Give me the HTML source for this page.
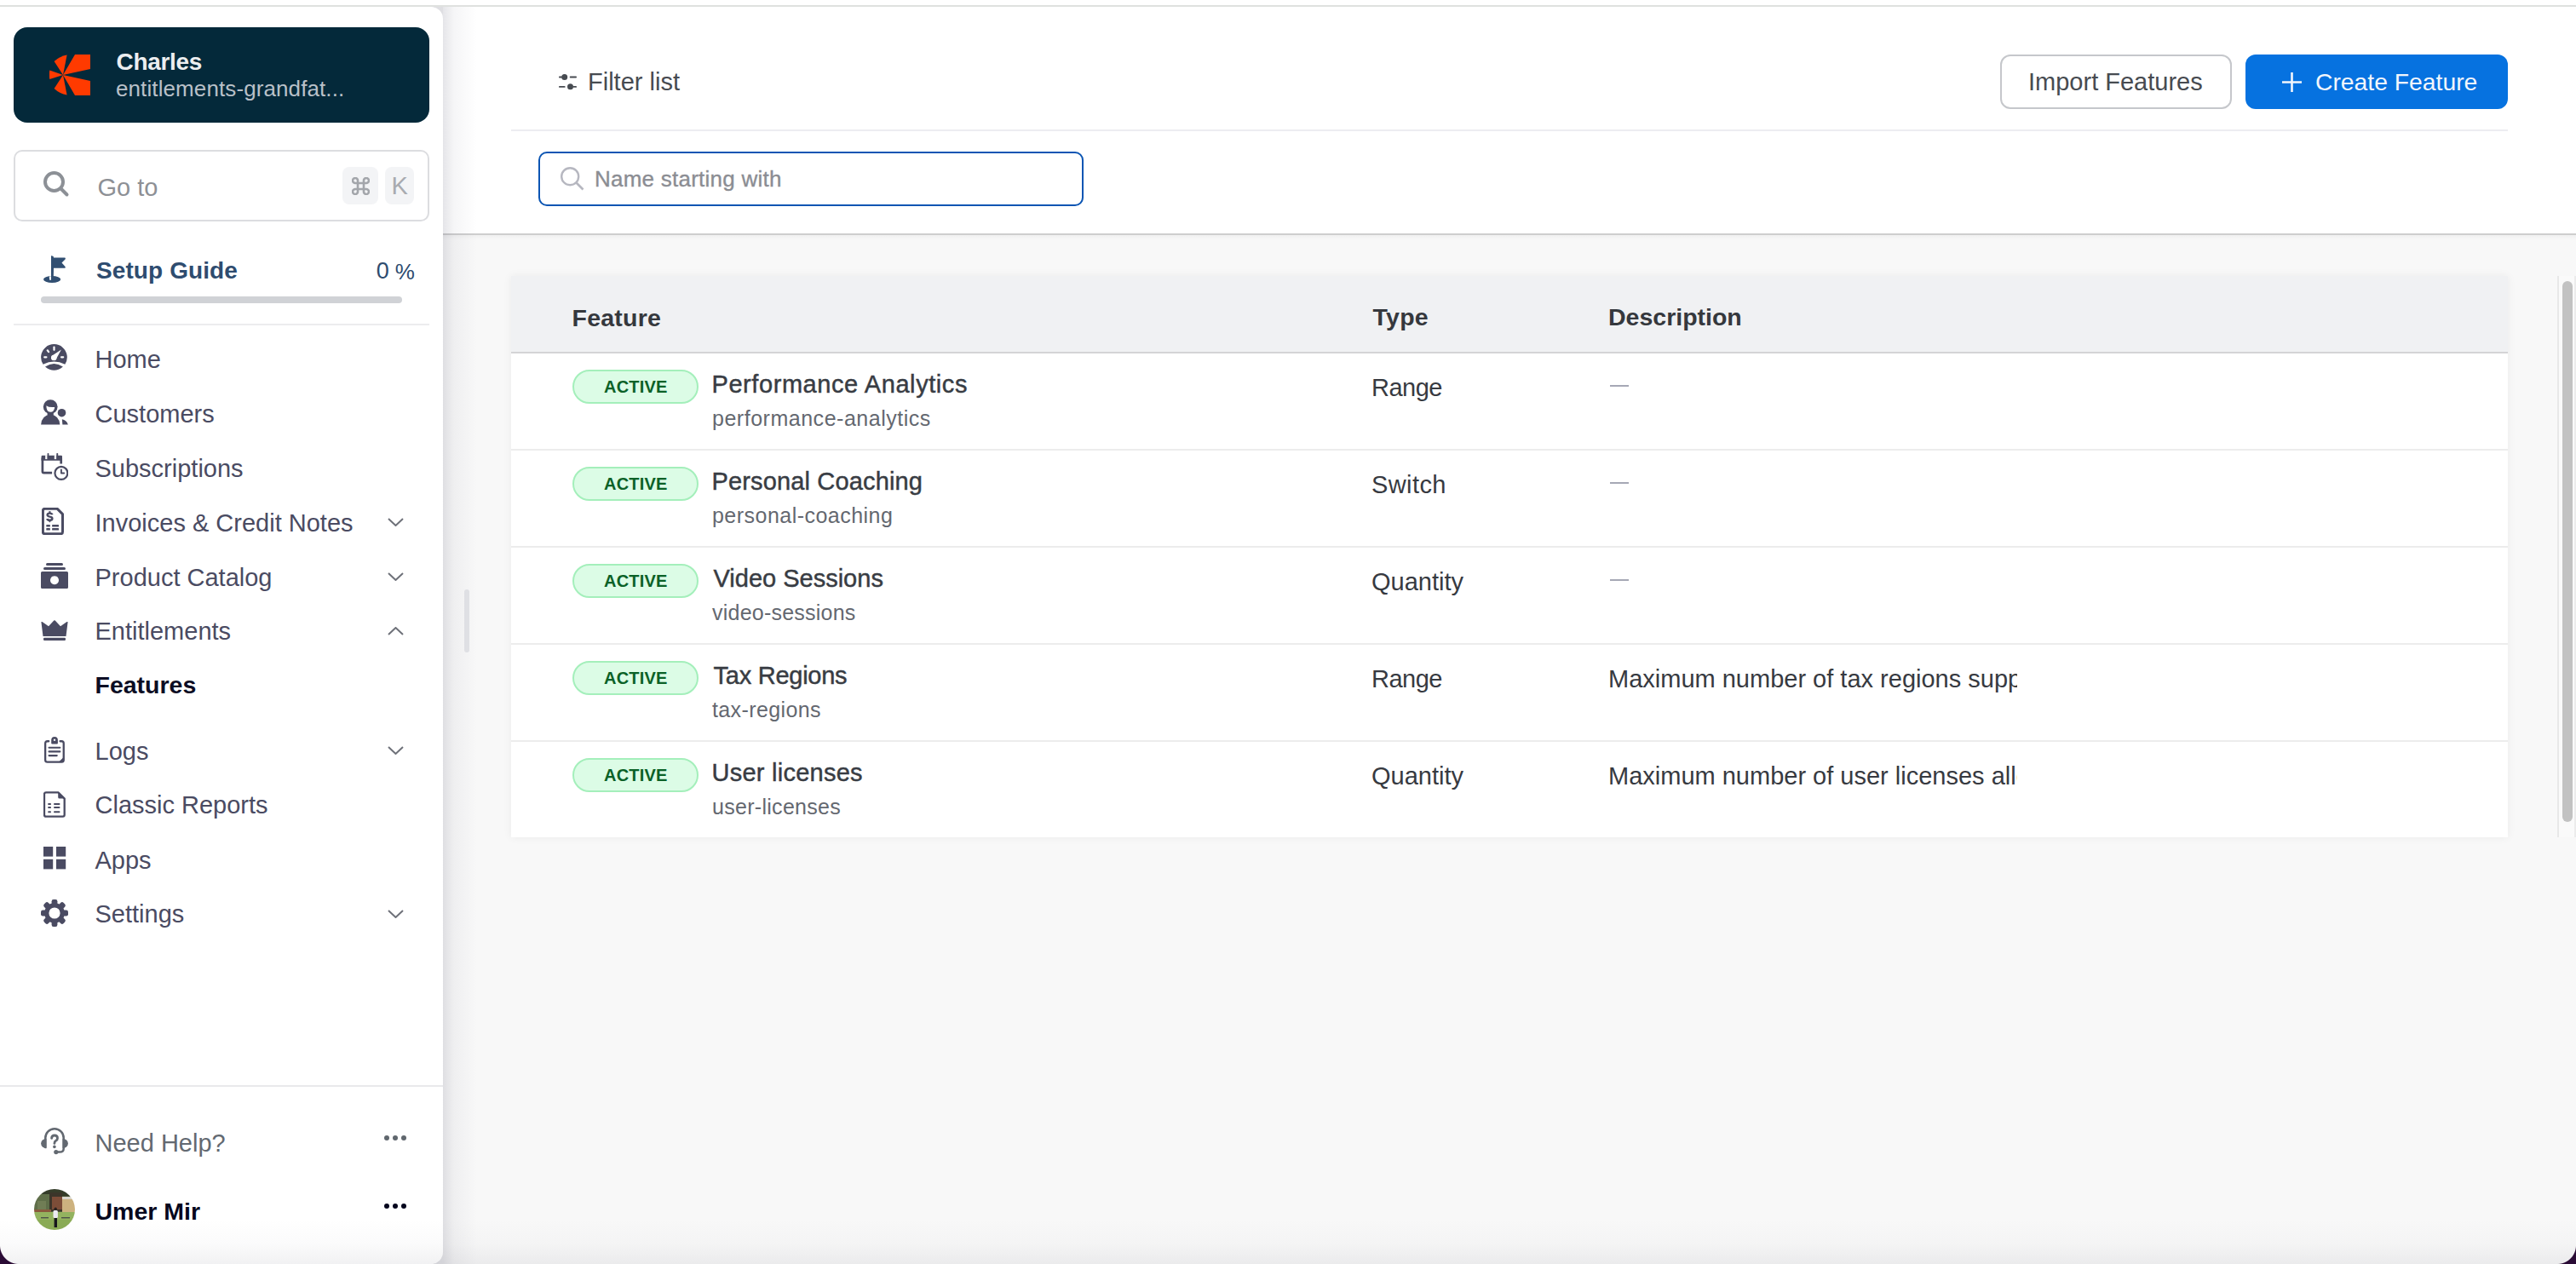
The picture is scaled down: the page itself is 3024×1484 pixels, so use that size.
<!DOCTYPE html>
<html><head><meta charset="utf-8"><title>Features</title>
<style>
html,body{margin:0;padding:0;}
body{width:3024px;height:1484px;position:relative;overflow:hidden;background:#f8f8f8;
font-family:"Liberation Sans",sans-serif;}
.t{position:absolute;white-space:nowrap;}
.r{position:absolute;}
</style></head><body>
<div class="r" style="left:0px;top:0px;width:3024px;height:8px;background:#ffffff"></div>
<div class="r" style="left:520px;top:8px;width:2504px;height:266px;background:#ffffff"></div>
<div class="r" style="left:520px;top:276px;width:2504px;height:6px;background:linear-gradient(to bottom,rgba(0,0,0,0.03),rgba(0,0,0,0))"></div>
<div class="r" style="left:520px;top:274px;width:2504px;height:2px;background:#cecece"></div>
<div class="r" style="left:0px;top:6px;width:3024px;height:2px;background:#dfe1df"></div>
<div class="r" style="left:500px;top:8px;width:60px;height:1476px;background:linear-gradient(to right,rgba(40,40,70,0.12) 33%,rgba(40,40,70,0.045) 55%,rgba(40,40,70,0) 100%)"></div>
<div class="r" style="left:0px;top:8px;width:520px;height:1476px;background:#ffffff;border-radius:0 14px 14px 0"></div>
<div class="r" style="left:16px;top:32px;width:488px;height:112px;background:#04293a;border-radius:16px"></div>
<svg class="r" style="left:58px;top:64px;" width="48" height="48" viewBox="0 0 48 48"><g fill="#ff3a00"><path d="M16 24 L30 0 L48 0 L48 17 Z"/><path d="M16 24 L48 31 L48 48 L30 48 Z"/><path d="M16 24 L5.6 8 Q12 2 20.6 0.5 Z"/><path d="M16 24 L0.3 18.5 Q-0.5 24 0.3 29 Z"/><path d="M16 24 L5.6 40 Q12 46 20.6 47.5 Z"/></g></svg>
<div class="t" style="left:136.5px;top:58.6px;font-size:28px;line-height:28px;color:#eceef0;font-weight:700;letter-spacing:-0.33px;">Charles</div>
<div class="t" style="left:136.0px;top:90.7px;font-size:26px;line-height:26px;color:#b9c0c8;font-weight:400;letter-spacing:0.1px;">entitlements-grandfat...</div>
<div class="r" style="left:16px;top:176px;width:488px;height:84px;box-sizing:border-box;border:2px solid #dcdde0;border-radius:10px;background:#fff"></div>
<svg class="r" style="left:46px;top:196px;" width="40" height="40" viewBox="0 0 40 40"><circle cx="17.5" cy="17.5" r="10.5" fill="none" stroke="#8c9096" stroke-width="4"/><path d="M25.5 25.5 L32.5 32.5" stroke="#8c9096" stroke-width="4" stroke-linecap="round"/></svg>
<div class="t" style="left:114.4px;top:205.7px;font-size:29px;line-height:29px;color:#8d9095;font-weight:400;letter-spacing:0px;">Go to</div>
<div class="r" style="left:402px;top:196px;width:42px;height:44px;background:#f3f4f6;border-radius:8px"></div>
<div class="r" style="left:452px;top:196px;width:34px;height:44px;background:#f3f4f6;border-radius:8px"></div>
<svg class="r" style="left:413px;top:208px;" width="21" height="21" viewBox="0 0 21 21"><g fill="none" stroke="#a3a6ab" stroke-width="2.6" stroke-linejoin="round"><path d="M7 7 H14 V14 H7 Z"/><path d="M7 7 V4.5 A3 3 0 1 0 4.5 7 Z"/><path d="M14 7 V4.5 A3 3 0 1 1 16.5 7 Z"/><path d="M7 14 V16.5 A3 3 0 1 1 4.5 14 Z"/><path d="M14 14 V16.5 A3 3 0 1 0 16.5 14 Z"/></g></svg>
<div class="t" style="left:459.5px;top:203.5px;font-size:29px;line-height:29px;color:#a8abb0;font-weight:400;letter-spacing:0px;">K</div>
<svg class="r" style="left:51px;top:300px;" width="26" height="32" viewBox="0 0 26 32"><g fill="#314f72"><path d="M9 1 Q9.6 -0.6 10.6 0.5 L11.5 2.6 H25 Q26.4 3 25.5 4.6 L21.5 8.6 L25.5 13 Q26.3 14.5 25 14.8 H12 Q11.7 15.5 11.7 17 V24 Z"/><rect x="9" y="1" width="2.8" height="26"/><ellipse cx="10.1" cy="28" rx="10.1" ry="4"/></g><path d="M6.7 24.4 L7.2 28.8 H9 V24.2 Z" fill="#fff"/></svg>
<div class="t" style="left:113.0px;top:304.3px;font-size:28px;line-height:28px;color:#2e4c6f;font-weight:700;letter-spacing:0.1px;">Setup Guide</div>
<div class="t" style="left:441.8px;top:305.1px;font-size:27px;line-height:27px;color:#2e4c6f;font-weight:400;letter-spacing:0px;">0</div>
<div class="t" style="left:463.8px;top:306.0px;font-size:26px;line-height:26px;color:#2e4c6f;font-weight:400;letter-spacing:-0.3px;">%</div>
<div class="r" style="left:48px;top:348px;width:424px;height:8px;background:#d0d2d6;border-radius:4px"></div>
<div class="r" style="left:16px;top:380px;width:488px;height:2px;background:#ececee"></div>
<svg class="r" style="left:47px;top:403px;" width="32" height="32" viewBox="0 0 32 32"><g fill="#4a4b62"><path d="M3.6 24.85 A15.35 15.35 0 1 1 29.3 24.85 Q16.45 17.9 3.6 24.85 Z"/><path d="M6 27.4 Q16.45 20.4 26.9 27.4 Q16.45 36 6 27.4 Z"/></g><g stroke="#fff" stroke-width="2.2" stroke-linecap="round" fill="none"><path d="M16.5 4.6 V7.8"/><path d="M8.7 8.3 L10.1 10.1"/><path d="M5.2 16.3 H7.4"/><path d="M25 16.3 H27.2"/></g><path d="M13.94 14.74 L24.9 7.5 L18.66 19.06 A3.2 3.2 0 0 1 13.94 14.74 Z" fill="#fff"/><circle cx="16.3" cy="16.9" r="3.2" fill="#fff"/></svg>
<svg class="r" style="left:48px;top:469px;" width="32" height="32" viewBox="0 0 32 32"><g fill="#4a4b62"><circle cx="11.2" cy="8.6" r="8.4"/><rect x="7.6" y="14" width="7.2" height="5"/><path d="M0.1 29.5 Q0.9 18.8 11.2 17.8 Q21.5 18.8 22.3 29.5 Z"/><circle cx="24.5" cy="15.7" r="4.8"/><path d="M24.8 23.2 Q30 24 31.9 29.5 H25.4 Z"/></g><path d="M6.4 7.2 Q9.6 9.7 16.2 8.9 Q15.8 14.6 11.2 14.7 Q6.2 14.5 6.4 7.2 Z" fill="#fff"/></svg>
<svg class="r" style="left:47.5px;top:532px;" width="32" height="32" viewBox="0 0 32 32"><g fill="none" stroke="#4a4b62" stroke-width="2.7" stroke-linejoin="round"><path d="M13.1 23.2 H3.5 Q1.9 23.2 1.9 21.6 V6 H23.7 V12.5"/></g><circle cx="23.9" cy="23.4" r="7.45" fill="none" stroke="#4a4b62" stroke-width="2.2"/><path d="M23.9 19.4 V23.5 H27.2" fill="none" stroke="#4a4b62" stroke-width="1.9" stroke-linecap="round" stroke-linejoin="round"/><path d="M0.6 3.8 Q0.6 2.8 1.6 2.8 H24 Q25 2.8 25 3.8 V8.7 H0.6 Z" fill="#4a4b62"/><g fill="#fff"><rect x="5.2" y="2.3" width="2.4" height="4.8"/><rect x="15.8" y="2.3" width="2.5" height="4.8"/></g><g fill="#4a4b62"><rect x="7.6" y="0.1" width="1.8" height="7.5" rx="0.6"/><rect x="18.3" y="0.1" width="1.9" height="7.5" rx="0.6"/></g></svg>
<svg class="r" style="left:49px;top:596px;" width="32" height="32" viewBox="0 0 32 32"><g fill="none" stroke="#4a4b62" stroke-width="3" stroke-linejoin="round"><path d="M3.8 1.35 H18.3 L24.5 7.6 V28.6 Q24.5 30.7 22.4 30.7 H3.5 Q1.4 30.7 1.4 28.6 V3.5 Q1.4 1.35 3.8 1.35 Z"/></g><g fill="#4a4b62"></g><path d="M12.4 8.2 Q12 6.6 9.4 6.6 Q6.6 6.6 6.6 8.6 Q6.6 10.2 9.4 10.6 Q12.4 11 12.4 12.8 Q12.4 14.8 9.4 14.8 Q6.6 14.8 6.3 13" fill="none" stroke="#4a4b62" stroke-width="2.4"/><g fill="#4a4b62"><rect x="8.3" y="4.2" width="2.2" height="3"/><path d="M7.4 15 L9.4 17.4 L11.4 15 Z"/><rect x="5.3" y="20.1" width="4.6" height="2.4" rx="0.6"/><rect x="12.1" y="20.1" width="7.9" height="2.4" rx="0.6"/><rect x="5.3" y="24.1" width="4.6" height="2.4" rx="0.6"/><rect x="12.1" y="24.1" width="7.9" height="2.4" rx="0.6"/></g></svg>
<svg class="r" style="left:48px;top:661px;" width="32" height="32" viewBox="0 0 32 32"><g fill="#4a4b62"><rect x="6" y="0" width="20" height="3" rx="1.5"/><rect x="3" y="5" width="26" height="3" rx="1.5"/><path d="M1.5 10 H30.5 A1.5 1.5 0 0 1 32 11.5 V28.5 A1.5 1.5 0 0 1 30.5 30 H1.5 A1.5 1.5 0 0 1 0 28.5 V11.5 A1.5 1.5 0 0 1 1.5 10 Z M16 15.2 A5 5 0 1 0 16.01 15.2 Z" fill-rule="evenodd"/></g></svg>
<svg class="r" style="left:48px;top:728px;" width="32" height="32" viewBox="0 0 32 32"><g fill="#4a4b62"><path d="M0.5 3 Q0 1.5 1.5 2 L9 7.2 L15.3 0.6 Q16 0 16.7 0.6 L23 7.2 L30.5 2 Q32 1.5 31.5 3 L29.5 19 H2.5 Z"/><rect x="3" y="20.8" width="26" height="3.2" rx="1.2"/></g></svg>
<svg class="r" style="left:52px;top:865px;" width="32" height="32" viewBox="0 0 32 32"><g fill="none" stroke="#4a4b62" stroke-width="2.3" stroke-linejoin="round" stroke-linecap="round"><path d="M5.2 5.25 H3.6 Q1.15 5.25 1.15 7.7 V27.2 Q1.15 29.65 3.6 29.65 H20.3 Q22.75 29.65 22.75 27.2 V7.7 Q22.75 5.25 20.3 5.25 H18.6"/></g><g fill="#4a4b62"><path d="M8.2 8.5 V3.9 A3.85 3.85 0 0 1 15.9 3.9 V7.5 Q15.9 8.5 14.9 8.5 H9.2 Q8.2 8.5 8.2 7.5 Z M10.9 2.8 V4.8 H13.1 V2.8 Z" fill-rule="evenodd"/><rect x="4.5" y="11.65" width="14.9" height="2.1" rx="1.05"/><rect x="4.5" y="16.35" width="14.9" height="2.1" rx="1.05"/><rect x="4.5" y="21.05" width="11.3" height="2.1" rx="1.05"/><path d="M22.9 23.8 V29.8 H16.8 Z"/></g></svg>
<svg class="r" style="left:51px;top:929px;" width="32" height="32" viewBox="0 0 32 32"><g fill="none" stroke="#4a4b62" stroke-width="2.3" stroke-linejoin="round"><path d="M3 1.45 H17.6 L24.7 8.6 V27.6 Q24.7 29.65 22.7 29.65 H3 Q1 29.65 1 27.6 V3.5 Q1 1.45 3 1.45 Z"/></g><g fill="#4a4b62"><path d="M17.2 1.5 L25.2 9.2 V8.4 H18.7 Q17.2 8.4 17.2 6.9 Z"/><rect x="5.3" y="13.9" width="3.6" height="2.05" rx="0.5"/><rect x="12" y="13.9" width="7.5" height="2.05" rx="1"/><rect x="5.3" y="17.9" width="3.6" height="2.05" rx="0.5"/><rect x="12" y="17.9" width="7.5" height="2.05" rx="1"/><rect x="5.3" y="23.2" width="3.6" height="2.05" rx="0.5"/><rect x="12" y="23.2" width="7.5" height="2.05" rx="1"/></g></svg>
<svg class="r" style="left:51px;top:994px;" width="32" height="32" viewBox="0 0 32 32"><g fill="#4a4b62"><rect x="0" y="0" width="11.2" height="11.6"/><rect x="15" y="0" width="11.2" height="11.6"/><rect x="0" y="14.8" width="11.2" height="11.6"/><rect x="15" y="14.8" width="11.2" height="11.6"/></g></svg>
<svg class="r" style="left:48px;top:1056px;" width="32" height="32" viewBox="0 0 32 32"><g fill="#4a4b62"><circle cx="16" cy="16" r="11.8"/><rect x="12.6" y="0" width="6.8" height="32" rx="2.2"/><rect x="12.6" y="0" width="6.8" height="32" rx="2.2" transform="rotate(45 16 16)"/><rect x="12.6" y="0" width="6.8" height="32" rx="2.2" transform="rotate(90 16 16)"/><rect x="12.6" y="0" width="6.8" height="32" rx="2.2" transform="rotate(135 16 16)"/></g><circle cx="16" cy="16" r="6.6" fill="#fff"/></svg>
<div class="t" style="left:111.5px;top:407.5px;font-size:29px;line-height:29px;color:#4a4b62;font-weight:400;letter-spacing:0px;">Home</div>
<div class="t" style="left:111.5px;top:471.5px;font-size:29px;line-height:29px;color:#4a4b62;font-weight:400;letter-spacing:0px;">Customers</div>
<div class="t" style="left:111.5px;top:535.5px;font-size:29px;line-height:29px;color:#4a4b62;font-weight:400;letter-spacing:0px;">Subscriptions</div>
<div class="t" style="left:111.5px;top:599.5px;font-size:29px;line-height:29px;color:#4a4b62;font-weight:400;letter-spacing:0px;">Invoices &amp; Credit Notes</div>
<div class="t" style="left:111.5px;top:663.5px;font-size:29px;line-height:29px;color:#4a4b62;font-weight:400;letter-spacing:0px;">Product Catalog</div>
<div class="t" style="left:111.5px;top:727.2px;font-size:29px;line-height:29px;color:#4a4b62;font-weight:400;letter-spacing:0px;">Entitlements</div>
<div class="t" style="left:111.5px;top:789.5px;font-size:28.5px;line-height:28.5px;color:#0c0d24;font-weight:700;letter-spacing:0px;">Features</div>
<div class="t" style="left:111.5px;top:867.5px;font-size:29px;line-height:29px;color:#4a4b62;font-weight:400;letter-spacing:0px;">Logs</div>
<div class="t" style="left:111.5px;top:931.0px;font-size:29px;line-height:29px;color:#4a4b62;font-weight:400;letter-spacing:0px;">Classic Reports</div>
<div class="t" style="left:111.5px;top:995.5px;font-size:29px;line-height:29px;color:#4a4b62;font-weight:400;letter-spacing:0px;">Apps</div>
<div class="t" style="left:111.5px;top:1059.2px;font-size:29px;line-height:29px;color:#4a4b62;font-weight:400;letter-spacing:0px;">Settings</div>
<svg class="r" style="left:455px;top:608px;" width="19" height="10" viewBox="0 0 19 10"><path d="M1 1 L9.5 9 L18 1" fill="none" stroke="#6e7179" stroke-width="2"/></svg>
<svg class="r" style="left:455px;top:672px;" width="19" height="10" viewBox="0 0 19 10"><path d="M1 1 L9.5 9 L18 1" fill="none" stroke="#6e7179" stroke-width="2"/></svg>
<svg class="r" style="left:455px;top:736px;" width="19" height="10" viewBox="0 0 19 10"><path d="M1 9 L9.5 1 L18 9" fill="none" stroke="#6e7179" stroke-width="2"/></svg>
<svg class="r" style="left:455px;top:876px;" width="19" height="10" viewBox="0 0 19 10"><path d="M1 1 L9.5 9 L18 1" fill="none" stroke="#6e7179" stroke-width="2"/></svg>
<svg class="r" style="left:455px;top:1068px;" width="19" height="10" viewBox="0 0 19 10"><path d="M1 1 L9.5 9 L18 1" fill="none" stroke="#6e7179" stroke-width="2"/></svg>
<div class="r" style="left:0px;top:1274px;width:520px;height:2px;background:#e9e9eb"></div>
<svg class="r" style="left:48px;top:1324px;" width="32" height="32" viewBox="0 0 32 32"><g fill="none" stroke="#636971" stroke-width="2.5" stroke-linecap="round"><path d="M5.3 23 V12 A10.7 10.7 0 0 1 26.7 12 V24.5 Q26.7 28.6 22 28.6 H18.5"/></g><g fill="#636971"><path d="M6.5 12.8 A6.4 5.7 0 0 0 6.5 24.2 Z"/><path d="M25.5 12.8 A6.4 5.7 0 0 1 25.5 24.2 Z"/><circle cx="17.8" cy="28.6" r="2.6"/><circle cx="15.9" cy="22.4" r="1.8"/></g><path d="M12.6 12.3 Q12.8 9 16 9 Q19.5 9 19.5 12.2 Q19.5 14.3 17.6 15.3 Q15.9 16.2 15.9 18.4" fill="none" stroke="#636971" stroke-width="2.8" stroke-linecap="round"/></svg>
<div class="t" style="left:111.5px;top:1327.5px;font-size:29px;line-height:29px;color:#636971;font-weight:400;letter-spacing:0px;">Need Help?</div>
<div class="t" style="left:111.5px;top:1407.9px;font-size:28.5px;line-height:28.5px;color:#06071d;font-weight:700;letter-spacing:0px;">Umer Mir</div>
<div class="r" style="left:451.1px;top:1332.8px;width:6.4px;height:6.4px;background:#60676e;border-radius:50%"></div>
<div class="r" style="left:451.1px;top:1412.8px;width:6.4px;height:6.4px;background:#06071d;border-radius:50%"></div>
<div class="r" style="left:460.8px;top:1332.8px;width:6.4px;height:6.4px;background:#60676e;border-radius:50%"></div>
<div class="r" style="left:460.8px;top:1412.8px;width:6.4px;height:6.4px;background:#06071d;border-radius:50%"></div>
<div class="r" style="left:470.6px;top:1332.8px;width:6.4px;height:6.4px;background:#60676e;border-radius:50%"></div>
<div class="r" style="left:470.6px;top:1412.8px;width:6.4px;height:6.4px;background:#06071d;border-radius:50%"></div>
<svg class="r" style="left:40px;top:1396px;" width="48" height="48" viewBox="0 0 48 48"><defs><clipPath id="ac"><circle cx="24" cy="24" r="24"/></clipPath><filter id="ab" x="-10%" y="-10%" width="120%" height="120%"><feGaussianBlur stdDeviation="0.7"/></filter></defs><g clip-path="url(#ac)"><g filter="url(#ab)"><rect x="-2" y="-2" width="52" height="52" fill="#4a5438"/><rect x="-2" y="-2" width="52" height="10" fill="#353c2c"/><rect x="0" y="6" width="20" height="22" fill="#5e6e4a"/><rect x="4" y="14" width="10" height="10" fill="#6f7d55"/><rect x="18" y="4" width="15" height="22" fill="#3a3429"/><rect x="21" y="9" width="12" height="15" fill="#7b4e39"/><rect x="33" y="9" width="16" height="3" fill="#d9d6cc"/><rect x="33" y="12" width="16" height="16" fill="#cdb27f"/><rect x="0" y="24" width="20" height="4" fill="#8a5a3e"/><rect x="-2" y="27" width="52" height="23" fill="#93b35e"/><rect x="0" y="36" width="48" height="14" fill="#8aab55"/><rect x="8" y="33" width="9" height="1.4" fill="#4b5148"/><rect x="32" y="33" width="10" height="1.4" fill="#4b5148"/><circle cx="25.2" cy="23.3" r="1.7" fill="#2a2420"/><rect x="22.5" y="25" width="5.4" height="9" rx="1.5" fill="#ecebf2"/><rect x="23.6" y="34" width="3.4" height="11" fill="#15161a"/></g></g></svg>
<div class="r" style="left:545px;top:692px;width:6px;height:74px;background:#dfe0e4;border-radius:3px"></div>
<svg class="r" style="left:655.5px;top:86px;" width="21" height="20" viewBox="0 0 21 20"><g fill="#474b51"><rect x="0" y="3.6" width="4" height="1.9" rx="0.9"/><rect x="12.7" y="3.6" width="8.3" height="1.9" rx="0.9"/><rect x="0" y="14.9" width="7.6" height="1.9" rx="0.9"/><rect x="16.5" y="14.9" width="4.5" height="1.9" rx="0.9"/><circle cx="6.7" cy="4.5" r="3.5"/><circle cx="13.5" cy="15.8" r="3.5"/></g></svg>
<div class="t" style="left:690.0px;top:81.5px;font-size:29px;line-height:29px;color:#474b51;font-weight:400;letter-spacing:0px;">Filter list</div>
<div class="r" style="left:2348px;top:64px;width:272px;height:64px;box-sizing:border-box;border:2px solid #c5c7cb;border-radius:12px;background:#fff"></div>
<div class="t" style="left:2381.0px;top:81.8px;font-size:29px;line-height:29px;color:#474b51;font-weight:400;letter-spacing:0px;">Import Features</div>
<div class="r" style="left:2636px;top:64px;width:308px;height:64px;background:#0672e0;border-radius:12px"></div>
<svg class="r" style="left:2679px;top:84.5px;" width="23" height="23" viewBox="0 0 23 23"><path d="M11.5 0 V23 M0 11.5 H23" stroke="#f2f6fc" stroke-width="2.6"/></svg>
<div class="t" style="left:2718.0px;top:82.3px;font-size:28.3px;line-height:28.3px;color:#f2f6fc;font-weight:400;letter-spacing:0px;">Create Feature</div>
<div class="r" style="left:600px;top:152px;width:2344px;height:2px;background:#ededf1"></div>
<div class="r" style="left:632px;top:178px;width:640px;height:64px;box-sizing:border-box;border:2px solid #0b55b3;border-radius:10px;background:#fff"></div>
<svg class="r" style="left:656px;top:194px;" width="32" height="32" viewBox="0 0 32 32"><circle cx="13.2" cy="13.2" r="10" fill="none" stroke="#b6b7c0" stroke-width="2.4"/><path d="M20.5 20.5 L28.5 28.5" stroke="#b6b7c0" stroke-width="2.6"/></svg>
<div class="t" style="left:698.0px;top:196.7px;font-size:26px;line-height:26px;color:#8b8d93;font-weight:400;letter-spacing:0.24px;-webkit-text-stroke:0.35px #8b8d93">Name starting with</div>
<div class="r" style="left:600px;top:324px;width:2344px;height:659px;background:#fff;box-shadow:0 0 10px rgba(0,0,0,0.06)"></div>
<div class="r" style="left:600px;top:324px;width:2344px;height:89px;background:#f0f1f3"></div>
<div class="r" style="left:600px;top:413px;width:2344px;height:2px;background:#d4d4d6"></div>
<div class="t" style="left:671.5px;top:359.3px;font-size:28.5px;line-height:28.5px;color:#35383d;font-weight:700;letter-spacing:0.23px;">Feature</div>
<div class="t" style="left:1611.5px;top:358.2px;font-size:28.5px;line-height:28.5px;color:#35383d;font-weight:700;letter-spacing:0.27px;">Type</div>
<div class="t" style="left:1888.0px;top:358.2px;font-size:28.5px;line-height:28.5px;color:#35383d;font-weight:700;letter-spacing:0px;">Description</div>
<div class="r" style="left:672px;top:434px;width:148px;height:40px;box-sizing:border-box;border:2px solid #a4efbb;border-radius:20px;background:#dcfce6"></div>
<div class="t" style="left:709.0px;top:444.3px;font-size:20px;line-height:20px;color:#0b6127;font-weight:700;letter-spacing:0.2px;">ACTIVE</div>
<div class="t" style="left:835.5px;top:436.6px;font-size:29px;line-height:29px;color:#383c43;font-weight:400;letter-spacing:0.57px;-webkit-text-stroke:0.45px #383c43">Performance Analytics</div>
<div class="t" style="left:836.0px;top:479.2px;font-size:25px;line-height:25px;color:#646870;font-weight:400;letter-spacing:0.52px;">performance-analytics</div>
<div class="t" style="left:1610.0px;top:440.7px;font-size:29px;line-height:29px;color:#373a41;font-weight:400;letter-spacing:-0.5px;">Range</div>
<div class="r" style="left:1890px;top:451.6px;width:22px;height:2px;background:#a6a8b5"></div>
<div class="r" style="left:600px;top:527px;width:2344px;height:2px;background:#ececec"></div>
<div class="r" style="left:672px;top:548px;width:148px;height:40px;box-sizing:border-box;border:2px solid #a4efbb;border-radius:20px;background:#dcfce6"></div>
<div class="t" style="left:709.0px;top:558.3px;font-size:20px;line-height:20px;color:#0b6127;font-weight:700;letter-spacing:0.2px;">ACTIVE</div>
<div class="t" style="left:835.5px;top:550.6px;font-size:29px;line-height:29px;color:#383c43;font-weight:400;letter-spacing:0.15px;-webkit-text-stroke:0.45px #383c43">Personal Coaching</div>
<div class="t" style="left:836.0px;top:593.2px;font-size:25px;line-height:25px;color:#646870;font-weight:400;letter-spacing:0.47px;">personal-coaching</div>
<div class="t" style="left:1610.0px;top:554.7px;font-size:29px;line-height:29px;color:#373a41;font-weight:400;letter-spacing:0.4px;">Switch</div>
<div class="r" style="left:1890px;top:565.6px;width:22px;height:2px;background:#a6a8b5"></div>
<div class="r" style="left:600px;top:641px;width:2344px;height:2px;background:#ececec"></div>
<div class="r" style="left:672px;top:662px;width:148px;height:40px;box-sizing:border-box;border:2px solid #a4efbb;border-radius:20px;background:#dcfce6"></div>
<div class="t" style="left:709.0px;top:672.3px;font-size:20px;line-height:20px;color:#0b6127;font-weight:700;letter-spacing:0.2px;">ACTIVE</div>
<div class="t" style="left:837.5px;top:664.6px;font-size:29px;line-height:29px;color:#383c43;font-weight:400;letter-spacing:0.0px;-webkit-text-stroke:0.45px #383c43">Video Sessions</div>
<div class="t" style="left:836.0px;top:707.2px;font-size:25px;line-height:25px;color:#646870;font-weight:400;letter-spacing:0.23px;">video-sessions</div>
<div class="t" style="left:1610.0px;top:668.7px;font-size:29px;line-height:29px;color:#373a41;font-weight:400;letter-spacing:0.0px;">Quantity</div>
<div class="r" style="left:1890px;top:679.6px;width:22px;height:2px;background:#a6a8b5"></div>
<div class="r" style="left:600px;top:755px;width:2344px;height:2px;background:#ececec"></div>
<div class="r" style="left:672px;top:776px;width:148px;height:40px;box-sizing:border-box;border:2px solid #a4efbb;border-radius:20px;background:#dcfce6"></div>
<div class="t" style="left:709.0px;top:786.3px;font-size:20px;line-height:20px;color:#0b6127;font-weight:700;letter-spacing:0.2px;">ACTIVE</div>
<div class="t" style="left:837.5px;top:778.6px;font-size:29px;line-height:29px;color:#383c43;font-weight:400;letter-spacing:-0.25px;-webkit-text-stroke:0.45px #383c43">Tax Regions</div>
<div class="t" style="left:836.0px;top:821.2px;font-size:25px;line-height:25px;color:#646870;font-weight:400;letter-spacing:0.38px;">tax-regions</div>
<div class="t" style="left:1610.0px;top:782.7px;font-size:29px;line-height:29px;color:#373a41;font-weight:400;letter-spacing:-0.5px;">Range</div>
<div class="r" style="left:1880px;top:776px;width:488px;height:50px;overflow:hidden"><div class="t" style="left:8.0px;top:6.7px;font-size:29px;line-height:29px;color:#373a41;font-weight:400;letter-spacing:0px;">Maximum number of tax regions supported</div>
</div>
<div class="r" style="left:600px;top:869px;width:2344px;height:2px;background:#ececec"></div>
<div class="r" style="left:672px;top:890px;width:148px;height:40px;box-sizing:border-box;border:2px solid #a4efbb;border-radius:20px;background:#dcfce6"></div>
<div class="t" style="left:709.0px;top:900.3px;font-size:20px;line-height:20px;color:#0b6127;font-weight:700;letter-spacing:0.2px;">ACTIVE</div>
<div class="t" style="left:835.5px;top:892.6px;font-size:29px;line-height:29px;color:#383c43;font-weight:400;letter-spacing:0.25px;-webkit-text-stroke:0.45px #383c43">User licenses</div>
<div class="t" style="left:836.0px;top:935.2px;font-size:25px;line-height:25px;color:#646870;font-weight:400;letter-spacing:0.29px;">user-licenses</div>
<div class="t" style="left:1610.0px;top:896.7px;font-size:29px;line-height:29px;color:#373a41;font-weight:400;letter-spacing:0.0px;">Quantity</div>
<div class="r" style="left:1880px;top:890px;width:488px;height:50px;overflow:hidden"><div class="t" style="left:8.0px;top:6.7px;font-size:29px;line-height:29px;color:#373a41;font-weight:400;letter-spacing:0px;">Maximum number of user licenses allowed</div>
</div>
<div class="r" style="left:3002px;top:324px;width:22px;height:659px;background:#fafafa"></div>
<div class="r" style="left:3002px;top:324px;width:2px;height:659px;background:#e8e8e8"></div>
<div class="r" style="left:3022px;top:324px;width:2px;height:659px;background:#ececec"></div>
<div class="r" style="left:3008px;top:330px;width:12px;height:635px;background:#c2c2c2;border-radius:6px"></div>
<div class="r" style="left:0px;top:1430px;width:3024px;height:54px;background:linear-gradient(to bottom,rgba(60,60,80,0),rgba(60,60,80,0.02) 55%,rgba(60,60,80,0.07));pointer-events:none"></div>
<div class="r" style="left:0px;top:1462px;width:22px;height:22px;background:radial-gradient(circle at 22px 0px, transparent 21.5px, #2a0b35 22.5px)"></div>
<div class="r" style="left:3002px;top:1462px;width:22px;height:22px;background:radial-gradient(circle at 0px 0px, transparent 21.5px, #2a0b35 22.5px)"></div>
</body></html>
